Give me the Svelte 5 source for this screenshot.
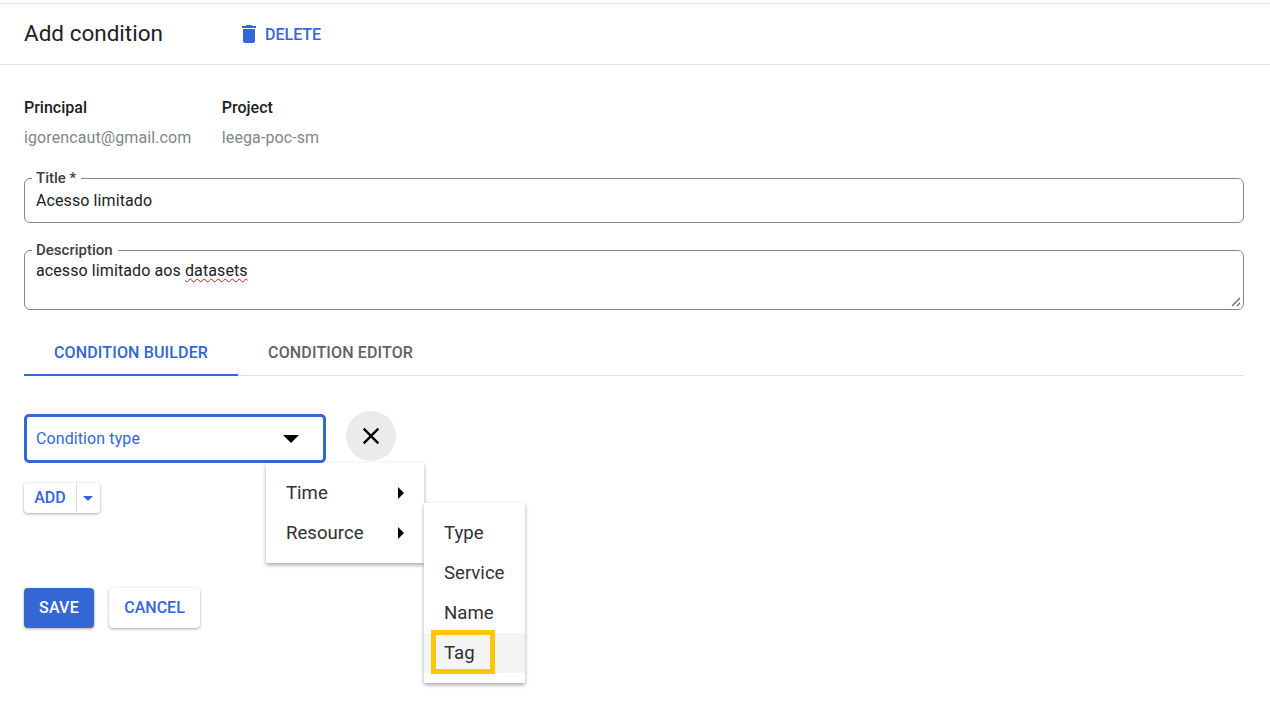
<script>
	const tabs = ['Condition builder', 'Condition editor'];
	const rootItems = ['Time', 'Resource'];
	const subItems = ['Type', 'Service', 'Name', 'Tag'];
</script>

<div class="page">
	<header class="head">
		<h1>Add condition</h1>
		<button class="flat delete">
			<svg width="24" height="24" viewBox="0 0 24 24"><path d="M6 19c0 1.1.9 2 2 2h8c1.1 0 2-.9 2-2V7H6v12zM19 4h-3.5l-1-1h-5l-1 1H5v2h14V4z" /></svg>
			Delete
		</button>
	</header>

	<main class="content">
		<div class="meta">
			<div class="meta-col">
				<div class="meta-label">Principal</div>
				<div class="meta-value">igorencaut@gmail.com</div>
			</div>
			<div class="meta-col">
				<div class="meta-label">Project</div>
				<div class="meta-value">leega-poc-sm</div>
			</div>
		</div>

		<div class="field title-field">
			<span class="field-label">Title *</span>
			<div class="field-text">Acesso limitado</div>
		</div>

		<div class="field desc-field">
			<span class="field-label">Description</span>
			<div class="field-text">acesso limitado aos <span class="misspelled">datasets</span></div>
			<svg class="resizer" width="10" height="10" viewBox="0 0 10 10"><path d="M1 9 9 1M6 9 9 6" /></svg>
		</div>

		<div class="tabs">
			{#each tabs as tab, i}
				<div class="tab" class:active={i === 0}>{tab}</div>
			{/each}
		</div>

		<div class="builder">
			<div class="select-row">
				<div class="select">
					<span>Condition type</span>
					<span class="select-arrow"></span>
				</div>
				<button class="clear" aria-label="Clear">
					<svg width="28" height="28" viewBox="0 0 24 24"><path d="M19 6.41 17.59 5 12 10.59 6.41 5 5 6.41 10.59 12 5 17.59 6.41 19 12 13.41 17.59 19 19 17.59 13.41 12z" /></svg>
				</button>
			</div>

			<div class="split">
				<span class="split-main">Add</span>
				<span class="split-more"><span class="split-arrow"></span></span>
			</div>

			<div class="menu root-menu">
				{#each rootItems as item}
					<div class="menu-item">{item}<span class="sub-arrow"></span></div>
				{/each}
			</div>

			<div class="menu sub-menu">
				{#each subItems as item}
					<div class="menu-item" class:hover={item === 'Tag'}>{item}</div>
				{/each}
			</div>
			<div class="callout"></div>
		</div>

		<div class="actions">
			<button class="save">Save</button>
			<button class="cancel">Cancel</button>
		</div>
	</main>
</div>

<style>
	:global(body) {
		background: #fff;
	}
	.page {
		font-family: Roboto, 'Liberation Sans', sans-serif;
		color: #202124;
		padding-top: 3px;
		min-height: 701px;
		box-sizing: border-box;
	}
	button {
		font-family: inherit;
		border: 0;
		background: none;
		padding: 0;
		margin: 0;
	}
	.head {
		display: flex;
		align-items: center;
		height: 60px;
		padding-left: 24px;
		border-top: 1px solid #e0e0e0;
		border-bottom: 1px solid #e0e0e0;
	}
	h1 {
		font-size: 22.5px;
		font-weight: 400;
		margin: 0 0 2px;
		width: 213px;
	}
	.flat {
		display: flex;
		align-items: center;
		gap: 4px;
		color: #3367d6;
		font-size: 16px;
		font-weight: 500;
		text-transform: uppercase;
	}
	.delete svg {
		fill: #3367d6;
	}
	.content {
		padding: 0 26px 0 24px;
	}
	.meta {
		display: flex;
		gap: 30.5px;
		padding-top: 35px;
		font-size: 16px;
	}
	.meta-label {
		font-weight: 500;
		line-height: 16px;
		height: 30px;
	}
	.meta-value {
		color: #80868b;
		line-height: 16px;
		letter-spacing: 0.1px;
	}
	.field {
		position: relative;
		border: 1px solid #80868b;
		border-radius: 6px;
		box-sizing: border-box;
		padding: 14px 11px 0;
		font-size: 16px;
	}
	.title-field {
		height: 45px;
		margin-top: 32px;
	}
	.desc-field {
		height: 60px;
		margin-top: 27px;
		padding-top: 12px;
	}
	.field-label {
		position: absolute;
		left: 7px;
		top: -9px;
		padding: 0 5px 0 4px;
		background: #fff;
		font-size: 15px;
		font-weight: 500;
		line-height: 16px;
		color: #3c4043;
	}
	.field-text {
		line-height: 16px;
		letter-spacing: 0.1px;
	}
	.misspelled {
		text-decoration: underline wavy #e01010 1px;
		text-underline-offset: 2px;
	}
	.resizer {
		position: absolute;
		right: 2px;
		bottom: 2px;
		fill: none;
		stroke: #5f6368;
		stroke-width: 1.2;
	}
	.tabs {
		display: flex;
		margin-top: 22px;
		height: 43px;
		border-bottom: 1px solid #e0e0e0;
	}
	.tab {
		padding: 13px 30px 0;
		font-size: 16px;
		font-weight: 500;
		line-height: 16px;
		text-transform: uppercase;
		color: #5f6368;
		box-sizing: border-box;
		letter-spacing: 0.15px;
	}
	.tab.active {
		color: #3367d6;
		border-bottom: 2px solid #3367d6;
		height: 44px;
	}
	.builder {
		position: relative;
		padding-top: 35px;
	}
	.select-row {
		display: flex;
		align-items: center;
		gap: 20px;
		height: 50px;
	}
	.select {
		width: 302px;
		height: 49px;
		box-sizing: border-box;
		border: 3px solid #3367d6;
		border-radius: 5px;
		display: flex;
		align-items: center;
		justify-content: space-between;
		padding: 0 24px 0 9px;
		margin-top: 5px;
		color: #3367d6;
		font-size: 16px;
		letter-spacing: 0.1px;
	}
	.select-arrow {
		width: 0;
		height: 0;
		border-left: 8px solid transparent;
		border-right: 8px solid transparent;
		border-top: 8px solid #000;
	}
	.clear {
		width: 50px;
		height: 50px;
		border-radius: 50%;
		background: #ebebeb;
		display: flex;
		align-items: center;
		justify-content: center;
	}
	.split {
		display: inline-flex;
		align-items: stretch;
		height: 30px;
		margin-top: 22px;
		border-radius: 4px;
		background: #fff;
		box-shadow: 0 1px 3px rgba(0, 0, 0, 0.35);
		font-size: 16px;
		font-weight: 500;
		color: #3367d6;
		text-transform: uppercase;
	}
	.split-main {
		width: 53px;
		padding-bottom: 2px;
		box-sizing: border-box;
		display: flex;
		align-items: center;
		justify-content: center;
		border-right: 1px solid #dadce0;
	}
	.split-more {
		width: 22px;
		padding-right: 1px;
		display: flex;
		align-items: center;
		justify-content: center;
	}
	.split-arrow {
		border-left: 5px solid transparent;
		border-right: 5px solid transparent;
		border-top: 5px solid #3367d6;
	}
	.menu {
		position: absolute;
		background: #fff;
		padding: 10px 0;
		box-sizing: border-box;
		box-shadow: 0 2px 4px rgba(0, 0, 0, 0.35);
		font-size: 18.6px;
		color: #303134;
	}
	.root-menu {
		left: 242px;
		top: 87px;
		width: 158px;
		height: 100px;
	}
	.sub-menu {
		left: 400px;
		top: 127px;
		width: 101px;
		height: 180px;
	}
	.menu-item {
		height: 40px;
		line-height: 40px;
		padding: 0 20px;
		position: relative;
	}
	.menu-item.hover {
		background: #f4f4f4;
	}
	.sub-arrow {
		position: absolute;
		right: 20px;
		top: 14px;
		border-top: 6px solid transparent;
		border-bottom: 6px solid transparent;
		border-left: 6px solid #000;
	}
	.callout {
		position: absolute;
		left: 407px;
		top: 254px;
		width: 64px;
		height: 44px;
		box-sizing: border-box;
		border: 5px solid #ffc60a;
	}
	.actions {
		display: flex;
		gap: 15px;
		margin-top: 75px;
	}
	.actions button {
		height: 40px;
		padding-bottom: 2px;
		border-radius: 4px;
		font-size: 16px;
		font-weight: 500;
		text-transform: uppercase;
		box-shadow: 0 1px 3px rgba(0, 0, 0, 0.35);
	}
	.save {
		width: 70px;
		background: #3367d6;
		color: #fff;
		letter-spacing: 0.2px;
	}
	.cancel {
		width: 91px;
		background: #fff;
		color: #3367d6;
	}
</style>
